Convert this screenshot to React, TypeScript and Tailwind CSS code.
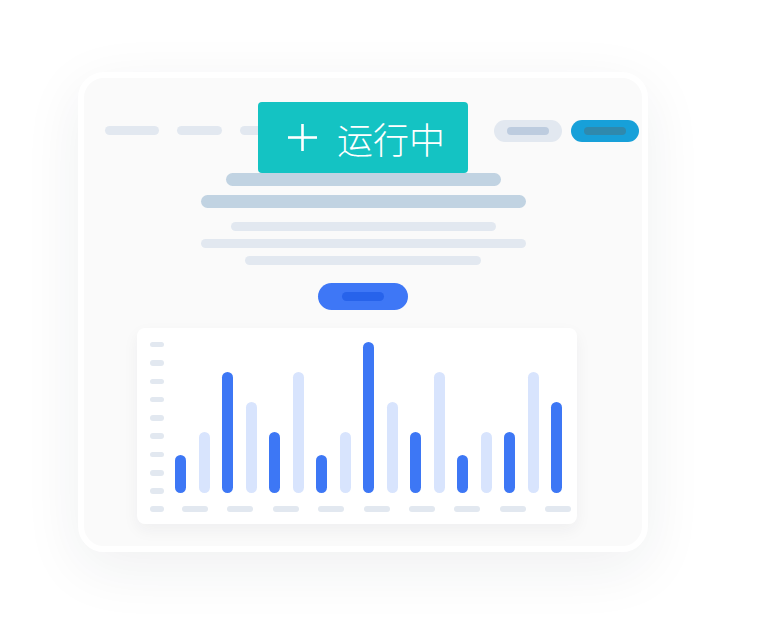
import React from 'react';

const bars = [
  { h: 'h-[38px]', dark: true },
  { h: 'h-[61px]', dark: false },
  { h: 'h-[121px]', dark: true },
  { h: 'h-[91px]', dark: false },
  { h: 'h-[61px]', dark: true },
  { h: 'h-[121px]', dark: false },
  { h: 'h-[38px]', dark: true },
  { h: 'h-[61px]', dark: false },
  { h: 'h-[151px]', dark: true },
  { h: 'h-[91px]', dark: false },
  { h: 'h-[61px]', dark: true },
  { h: 'h-[121px]', dark: false },
  { h: 'h-[38px]', dark: true },
  { h: 'h-[61px]', dark: false },
  { h: 'h-[61px]', dark: true },
  { h: 'h-[121px]', dark: false },
  { h: 'h-[91px]', dark: true },
];

const BarChart: React.FC = () => {
  return (
    <div className="ml-[53px] mt-[18px] w-[440px] h-[196px] self-start rounded-[8px] bg-white pl-[13px] pt-[13.5px] shadow-[0_6px_16px_rgba(30,41,59,0.05)]">
      <div className="flex">
        {/* y axis ticks */}
        <div className="flex h-[152px] w-[14px] flex-col justify-between">
          {Array.from({ length: 9 }).map((_, i) => (
            <div key={i} className="h-[5.5px] w-[14px] rounded-full bg-[#e2e8f0]" />
          ))}
        </div>
        <div className="ml-[11.3px] flex h-[152px] items-end gap-[12.5px] pb-[0.5px]">
          {bars.map((bar, i) => (
            <div
              key={i}
              className={`w-[11px] rounded-full ${bar.h} ${bar.dark ? 'bg-[#3d77f5]' : 'bg-[#d8e4fd]'}`}
            />
          ))}
        </div>
      </div>

      {/* x axis labels */}
      <div className="mt-[12.5px] flex items-center">
        <div className="h-[5.5px] w-[14px] rounded-full bg-[#e2e8f0]" />
        <div className="ml-[18px] flex gap-[19.4px]">
          {Array.from({ length: 9 }).map((_, i) => (
            <div key={i} className="h-[5.5px] w-[26px] rounded-full bg-[#e2e8f0]" />
          ))}
        </div>
      </div>
    </div>
  );
};

const App: React.FC = () => {
  return (
    <div className="h-[636px] w-[768px] overflow-hidden bg-white pl-[78px] pt-[72px]">
      <div className="relative h-[480px] w-[570px] rounded-[26px] border-[6px] border-white bg-[#fafafa] shadow-[0_16px_60px_rgba(30,41,59,0.07)]">
        <div className="flex flex-col items-center pt-[41.5px]">
          {/* nav row */}
          <div className="flex h-[22px] w-full items-center justify-between pl-[21px] pr-[3px]">
            <div className="flex items-center gap-[18px]">
              <div className="h-[9px] w-[54px] rounded-full bg-[#e2e8f0]" />
              <div className="h-[9px] w-[45px] rounded-full bg-[#e2e8f0]" />
              <div className="h-[9px] w-[45px] rounded-full bg-[#e2e8f0]" />
            </div>
            <div className="flex items-center gap-[9px]">
              <div className="flex h-[22px] w-[68px] items-center justify-center rounded-full bg-[#e2e8f0]">
                <div className="h-[8px] w-[42px] rounded-full bg-[#bdccdf]" />
              </div>
              <div className="flex h-[22px] w-[68px] items-center justify-center rounded-full bg-[#17a0d9]">
                <div className="h-[8px] w-[42px] rounded-full bg-[#2f89ad]" />
              </div>
            </div>
          </div>

          {/* headline */}
          <div className="mt-[31.5px] h-[13px] w-[275px] rounded-full bg-[#c1d3e2]" />
          <div className="mt-[8.5px] h-[13px] w-[325px] rounded-full bg-[#c1d3e2]" />

          {/* paragraph */}
          <div className="mt-[14px] h-[9px] w-[265px] rounded-full bg-[#e2e8f0]" />
          <div className="mt-[8.3px] h-[9px] w-[325px] rounded-full bg-[#e2e8f0]" />
          <div className="mt-[8.3px] h-[9px] w-[236px] rounded-full bg-[#e2e8f0]" />

          {/* button */}
          <div className="mt-[18.3px] flex h-[27px] w-[90px] items-center justify-center rounded-full bg-[#3e77f6]">
            <div className="h-[9px] w-[42px] rounded-full bg-[#2763eb]" />
          </div>

          <BarChart />
        </div>

        {/* running badge */}
        <div className="absolute left-[174px] top-[24px] flex h-[71px] w-[210px] items-center rounded-[4px] bg-[#14c3c3] pl-[30px]">
          <svg width="29" height="29" viewBox="0 0 29 29" className="shrink-0">
            <line x1="0" y1="14.5" x2="29" y2="14.5" stroke="white" strokeWidth="2.6" />
            <line x1="14.5" y1="1" x2="14.5" y2="28" stroke="white" strokeWidth="2.6" />
          </svg>
          <span className="ml-[20px] text-[36px] font-light leading-none text-white [font-family:'Noto_Sans_CJK_SC',sans-serif]">
            运行中
          </span>
        </div>
      </div>
    </div>
  );
};

export default App;
